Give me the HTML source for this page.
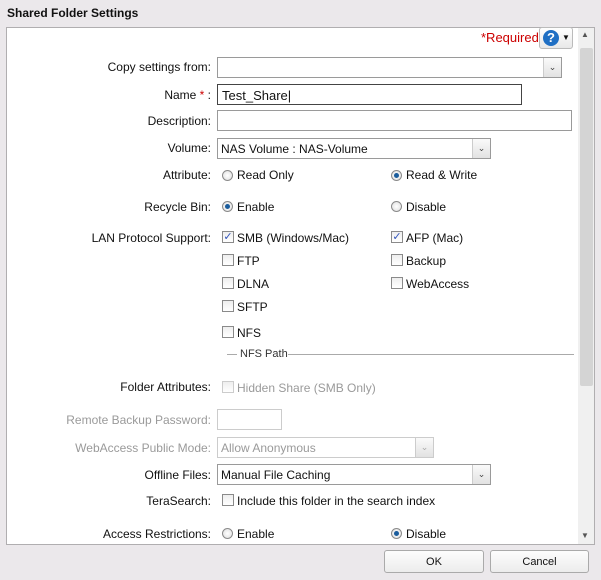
<!DOCTYPE html><html><head><style>
body{margin:0;width:601px;height:580px;background:#ebe8eb;font-family:"Liberation Sans",sans-serif;font-size:12px;color:#111;position:relative;overflow:hidden}
.a{position:absolute;white-space:nowrap}
.l{position:absolute;right:390px;white-space:nowrap}
.in{position:absolute;background:#fff;border:1px solid #9a9a9a;box-sizing:border-box;height:21px}
.dd{position:absolute;right:0;top:0;width:17px;height:19px;border-left:1px solid #ccc;background:linear-gradient(#fafafa,#e2e2e2);font-size:9px;text-align:center;line-height:19px;color:#444}
.r{position:absolute;width:11px;height:11px;border-radius:50%;border:1px solid #8a8a8a;background:radial-gradient(#fff,#ddd);box-sizing:border-box}
.r.on::after{content:"";position:absolute;left:2px;top:2px;width:5px;height:5px;border-radius:50%;background:#1a5c9c}
.c{position:absolute;width:12px;height:12px;border:1px solid #8a8a8a;background:linear-gradient(#eee,#fff);box-sizing:border-box;font-size:11px;line-height:10px;color:#3355bb;text-align:center}
.g{color:#9a9a9a}
.btn{position:absolute;top:550px;height:23px;border:1px solid #aaa;border-radius:3px;background:linear-gradient(#fdfdfd,#ececec);text-align:center;line-height:22px;font-size:11px;box-sizing:border-box}
</style></head><body>
<div class="a" style="left:7px;top:6px;font-weight:bold;font-size:12px">Shared Folder Settings</div>
<div class="a" style="left:6px;top:27px;width:589px;height:518px;background:#fff;border:1px solid #b0aeb0;box-sizing:border-box"></div>
<div class="a" style="left:578px;top:28px;width:16px;height:516px;background:#f0f0f0"></div>
<div class="a" style="left:580px;top:48px;width:13px;height:338px;background:#d4d4d4;border-radius:2px"></div>
<div class="a" style="left:581px;top:30px;font-size:8px;color:#555">▲</div>
<div class="a" style="left:581px;top:531px;font-size:8px;color:#555">▼</div>
<div class="a" style="left:481px;top:30px;color:#c00;font-size:13px">*Required</div>
<div class="a" style="left:539px;top:27px;width:34px;height:22px;border:1px solid #bbb;border-radius:3px;background:linear-gradient(#fff,#e8e8e8);box-sizing:border-box"><div class="a" style="left:3px;top:2px;width:16px;height:16px;border-radius:50%;background:#1f6fc4;color:#fff;font-weight:bold;font-size:13px;text-align:center;line-height:16px">?</div><div class="a" style="left:22px;top:5px;font-size:8px">▼</div></div>

<div class="l" style="top:60px">Copy settings from:</div>
<div class="in" style="left:217px;top:57px;width:345px"><div class="dd">⌄</div></div>
<div class="l" style="top:88px">Name <span style="color:#c00">*</span> :</div>
<div class="in" style="left:217px;top:84px;width:305px;border-color:#444"><span class="a" style="left:4px;top:3px;font-size:13px">Test_Share|</span></div>
<div class="l" style="top:114px">Description:</div>
<div class="in" style="left:217px;top:110px;width:355px"></div>
<div class="l" style="top:141px">Volume:</div>
<div class="in" style="left:217px;top:138px;width:274px"><span class="a" style="left:3px;top:3px">NAS Volume : NAS-Volume</span><div class="dd">⌄</div></div>
<div class="l" style="top:168px">Attribute:</div>
<div class="r" style="left:222px;top:170px"></div><div class="a" style="left:237px;top:168px">Read Only</div>
<div class="r on" style="left:391px;top:170px"></div><div class="a" style="left:406px;top:168px">Read &amp; Write</div>
<div class="l" style="top:200px">Recycle Bin:</div>
<div class="r on" style="left:222px;top:201px"></div><div class="a" style="left:237px;top:200px">Enable</div>
<div class="r" style="left:391px;top:201px"></div><div class="a" style="left:406px;top:200px">Disable</div>
<div class="l" style="top:231px">LAN Protocol Support:</div>
<div class="c" style="left:222px;top:231px">✓</div><div class="a" style="left:237px;top:231px">SMB (Windows/Mac)</div>
<div class="c" style="left:391px;top:231px">✓</div><div class="a" style="left:406px;top:231px">AFP (Mac)</div>
<div class="c" style="left:222px;top:254px"></div><div class="a" style="left:237px;top:254px">FTP</div>
<div class="c" style="left:391px;top:254px"></div><div class="a" style="left:406px;top:254px">Backup</div>
<div class="c" style="left:222px;top:277px"></div><div class="a" style="left:237px;top:277px">DLNA</div>
<div class="c" style="left:391px;top:277px"></div><div class="a" style="left:406px;top:277px">WebAccess</div>
<div class="c" style="left:222px;top:300px"></div><div class="a" style="left:237px;top:300px">SFTP</div>
<div class="c" style="left:222px;top:326px"></div><div class="a" style="left:237px;top:326px">NFS</div>
<div class="a" style="left:227px;top:354px;width:10px;border-top:1px solid #aaa"></div>
<div class="a" style="left:240px;top:348px;font-size:11px;color:#333">NFS Path</div>
<div class="a" style="left:288px;top:354px;width:286px;border-top:1px solid #aaa"></div>
<div class="l" style="top:380px">Folder Attributes:</div>
<div class="c" style="left:222px;top:381px;border-color:#ccc"></div><div class="a g" style="left:237px;top:381px">Hidden Share (SMB Only)</div>
<div class="l g" style="top:413px">Remote Backup Password:</div>
<div class="in" style="left:217px;top:409px;width:65px;border-color:#ccc"></div>
<div class="l g" style="top:441px">WebAccess Public Mode:</div>
<div class="in" style="left:217px;top:437px;width:217px;border-color:#ccc"><span class="a g" style="left:3px;top:3px">Allow Anonymous</span><div class="dd" style="color:#aaa">⌄</div></div>
<div class="l" style="top:468px">Offline Files:</div>
<div class="in" style="left:217px;top:464px;width:274px"><span class="a" style="left:3px;top:3px">Manual File Caching</span><div class="dd">⌄</div></div>
<div class="l" style="top:494px">TeraSearch:</div>
<div class="c" style="left:222px;top:494px"></div><div class="a" style="left:237px;top:494px">Include this folder in the search index</div>
<div class="l" style="top:527px">Access Restrictions:</div>
<div class="r" style="left:222px;top:528px"></div><div class="a" style="left:237px;top:527px">Enable</div>
<div class="r on" style="left:391px;top:528px"></div><div class="a" style="left:406px;top:527px">Disable</div>
<div class="btn" style="left:384px;width:100px">OK</div>
<div class="btn" style="left:490px;width:99px">Cancel</div>
</body></html>
